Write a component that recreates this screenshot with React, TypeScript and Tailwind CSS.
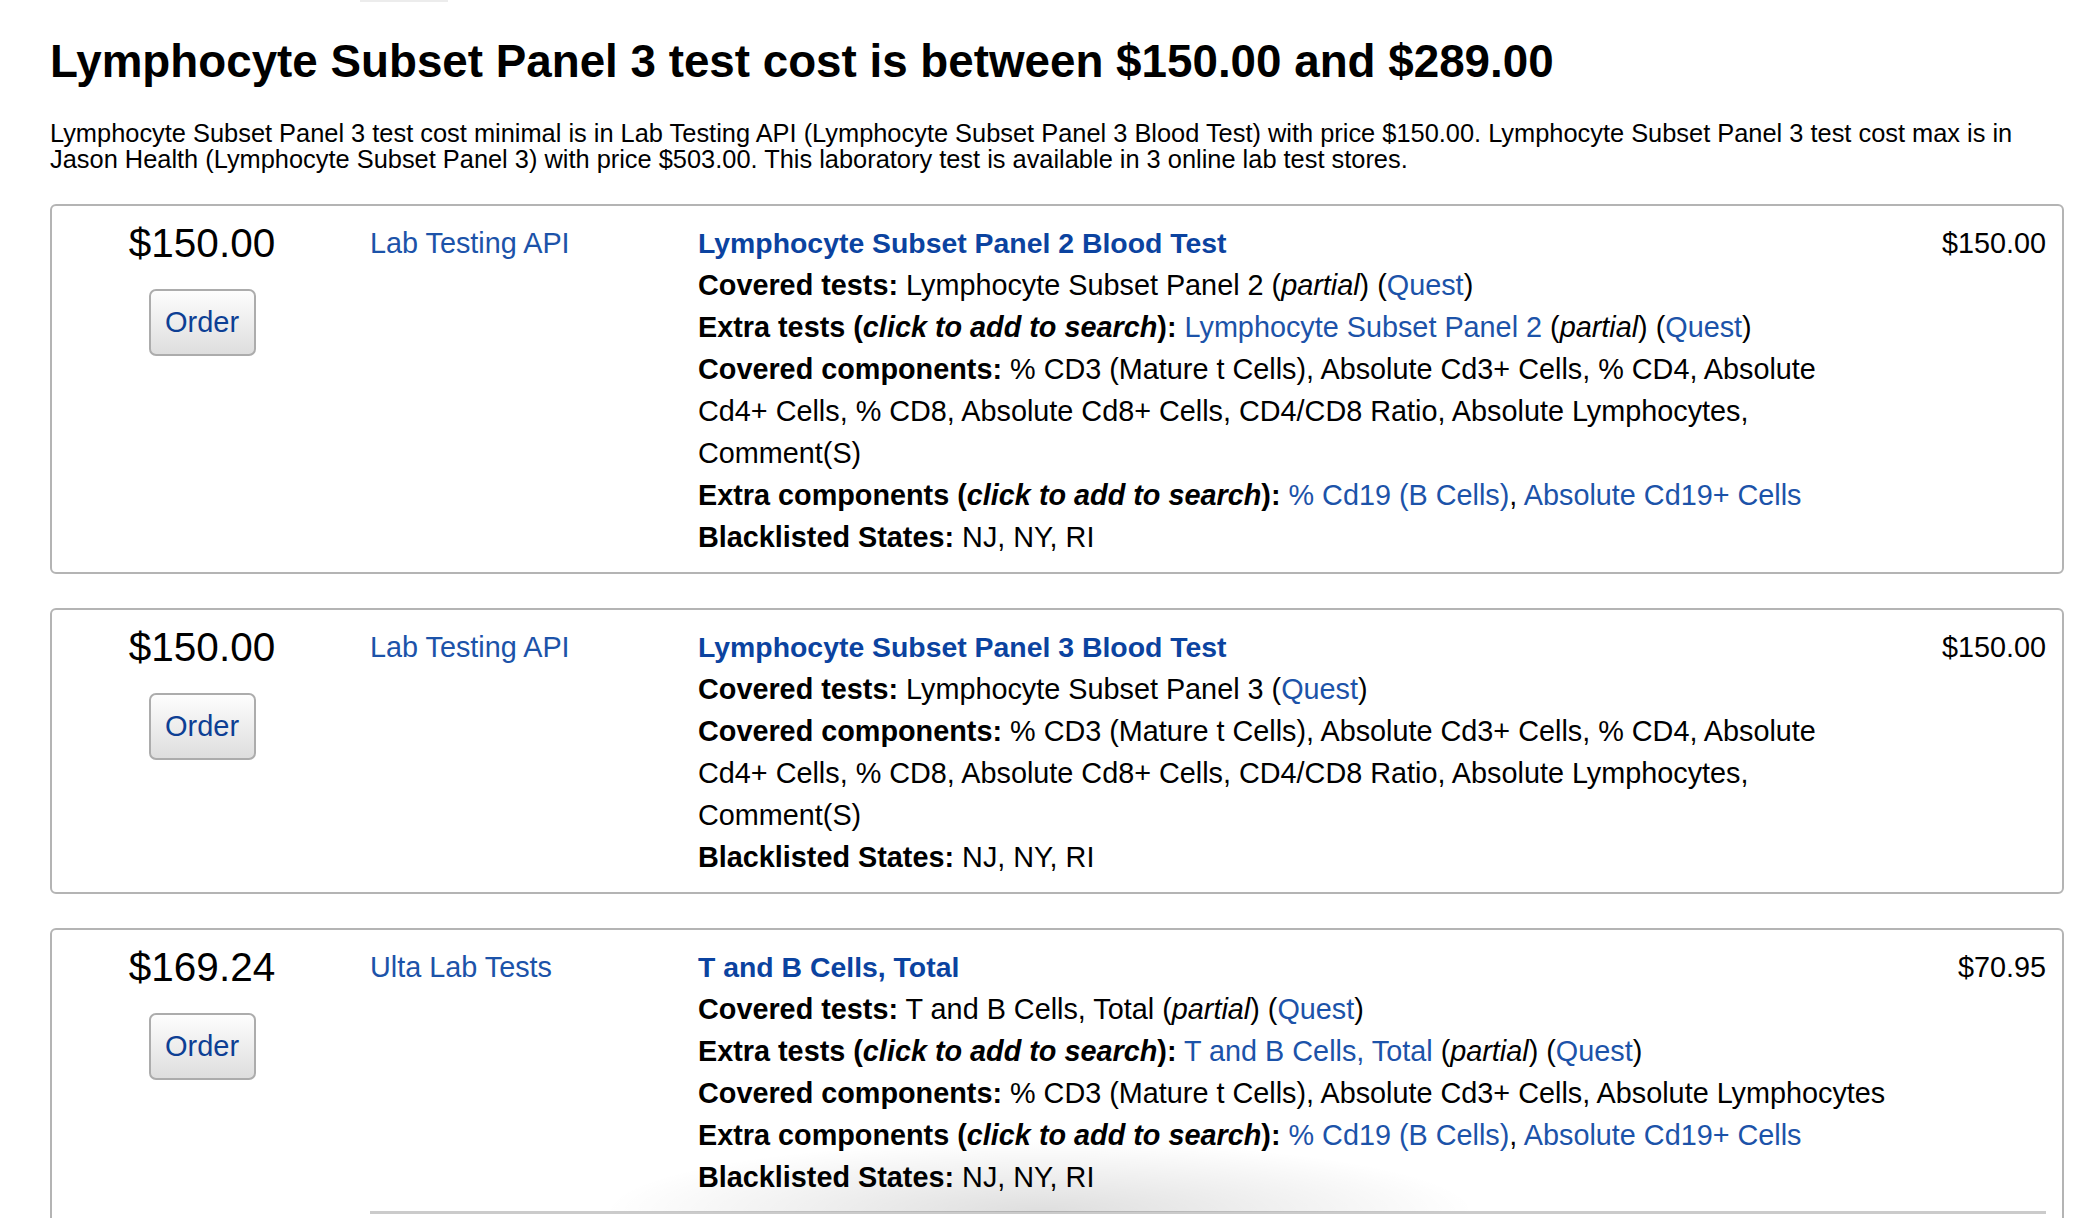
import React from "react";

type Offer = {
  price: string;
  vendor: string;
  title: string;
  listPrice: string;
  lines: React.ReactNode[];
  divider?: boolean;
};

const L = ({ children }: { children: React.ReactNode }) => (
  <a href="#" className="text-[#1c53a9]">
    {children}
  </a>
);

const clickToAdd = (
  <>
    (<i>click to add to search</i>):
  </>
);

const componentsFull =
  "% CD3 (Mature t Cells), Absolute Cd3+ Cells, % CD4, Absolute Cd4+ Cells, % CD8, Absolute Cd8+ Cells, CD4/CD8 Ratio, Absolute Lymphocytes, Comment(S)";

const blacklisted = (
  <>
    <b>Blacklisted States:</b> NJ, NY, RI
  </>
);

const extraComponents = (
  <>
    <b>Extra components {clickToAdd}</b> <L>% Cd19 (B Cells)</L>, <L>Absolute Cd19+ Cells</L>
  </>
);

const offers: Offer[] = [
  {
    price: "$150.00",
    vendor: "Lab Testing API",
    title: "Lymphocyte Subset Panel 2 Blood Test",
    listPrice: "$150.00",
    lines: [
      <>
        <b>Covered tests:</b> Lymphocyte Subset Panel 2 (<i>partial</i>) (<L>Quest</L>)
      </>,
      <>
        <b>Extra tests {clickToAdd}</b> <L>Lymphocyte Subset Panel 2</L> (<i>partial</i>) (<L>Quest</L>)
      </>,
      <>
        <b>Covered components:</b> {componentsFull}
      </>,
      extraComponents,
      blacklisted,
    ],
  },
  {
    price: "$150.00",
    vendor: "Lab Testing API",
    title: "Lymphocyte Subset Panel 3 Blood Test",
    listPrice: "$150.00",
    lines: [
      <>
        <b>Covered tests:</b> Lymphocyte Subset Panel 3 (<L>Quest</L>)
      </>,
      <>
        <b>Covered components:</b> {componentsFull}
      </>,
      blacklisted,
    ],
  },
  {
    price: "$169.24",
    vendor: "Ulta Lab Tests",
    title: "T and B Cells, Total",
    listPrice: "$70.95",
    divider: true,
    lines: [
      <>
        <b>Covered tests:</b> T and B Cells, Total (<i>partial</i>) (<L>Quest</L>)
      </>,
      <>
        <b>Extra tests {clickToAdd}</b> <L>T and B Cells, Total</L> (<i>partial</i>) (<L>Quest</L>)
      </>,
      <>
        <b>Covered components:</b> % CD3 (Mature t Cells), Absolute Cd3+ Cells, Absolute Lymphocytes
      </>,
      extraComponents,
      blacklisted,
    ],
  },
];

function OfferCard({ offer }: { offer: Offer }) {
  return (
    <div className="rounded-[6px] border-2 border-[#b4b4b4] bg-white pt-[16px] pb-[14px]">
      <div className="flex text-[28.8px] leading-[42px]">
        <div className="flex w-[300px] shrink-0 flex-col items-center">
          <div className="text-[40.5px] leading-[42px] text-black">{offer.price}</div>
          <button className="mt-[25px] h-[67px] w-[107px] rounded-[7px] border-2 border-[#acacac] bg-gradient-to-b from-[#fdfdfd] to-[#dedede] text-[29px] leading-none text-[#0d3f94]">
            Order
          </button>
        </div>
        <div className="w-[346px] shrink-0 pl-[18px]">
          <a href="#" className="text-[#1c53a9]">
            {offer.vendor}
          </a>
        </div>
        <div className="w-[1189px] shrink-0 text-black">
          <div>
            <a href="#" className="text-[28.4px] font-bold text-[#0b43a0]">
              {offer.title}
            </a>
          </div>
          {offer.lines.map((line, i) => (
            <div key={i}>{line}</div>
          ))}
        </div>
        <div className="flex-1 pr-[16px] text-right text-black">{offer.listPrice}</div>
      </div>
      {offer.divider && <div className="ml-[318px] mr-[16px] mt-[13px] h-[3px] bg-[#cbcbcb]" />}
    </div>
  );
}

export default function App() {
  return (
    <div className="relative h-[1218px] overflow-hidden bg-white px-[50px] pt-[39px] font-['Liberation_Sans',Arial,sans-serif] text-black">
      <div className="absolute left-[360px] top-0 h-[2px] w-[88px] bg-[#ececec]" />
      <h1 className="text-[45.75px] font-bold leading-[46px]">
        Lymphocyte Subset Panel 3 test cost is between $150.00 and $289.00
      </h1>
      <p className="mt-[35px] w-[2014px] text-[25.4px] leading-[26px]">
        Lymphocyte Subset Panel 3 test cost minimal is in Lab Testing API (Lymphocyte Subset Panel 3 Blood Test) with
        price $150.00. Lymphocyte Subset Panel 3 test cost max is in Jason Health (Lymphocyte Subset Panel 3) with price
        $503.00. This laboratory test is available in 3 online lab test stores.
      </p>
      <div className="mt-[32px] flex w-[2014px] flex-col gap-[34px]">
        {offers.map((o, i) => (
          <OfferCard key={i} offer={o} />
        ))}
      </div>
      <div className="pointer-events-none absolute left-[600px] top-[1140px] h-[72px] w-[880px] bg-[radial-gradient(ellipse_at_50%_100%,rgba(0,0,0,0.13),rgba(0,0,0,0)_70%)]" />
    </div>
  );
}
